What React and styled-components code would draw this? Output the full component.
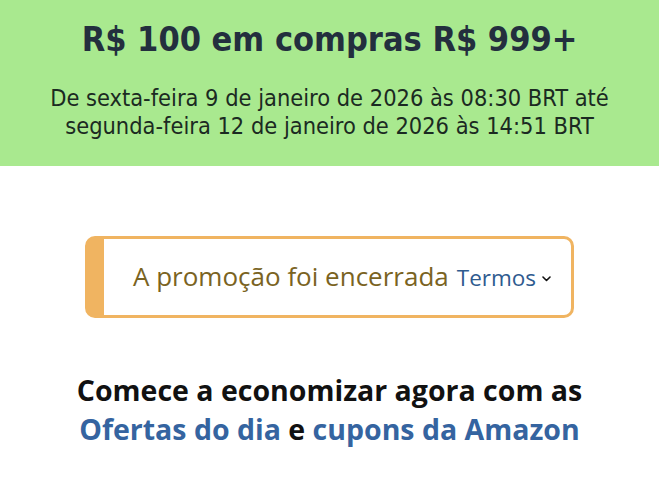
import React from "react";
import styled, { createGlobalStyle } from "styled-components";

const Global = createGlobalStyle`
  html, body { margin: 0; padding: 0; background: #fff; }
  body { font-family: "Open Sans", "Noto Sans", sans-serif; }
`;

const Page = styled.div`
  width: 659px;
  height: 500px;
  overflow: hidden;
  display: flex;
  flex-direction: column;
`;

const Banner = styled.header`
  background: #a9e98f;
  height: 166px;
  box-sizing: border-box;
  padding-top: 14px;
  display: flex;
  flex-direction: column;
  align-items: center;
  color: #1f2b38;
  text-align: center;
`;

const Title = styled.h1`
  margin: 0;
  font-family: "Liberation Sans Narrow", "DejaVu Sans Condensed", sans-serif;
  font-weight: 700;
  font-size: 34px;
  line-height: 50px;
  color: #232f3e;
`;

const Dates = styled.p`
  margin: 20px 0 0;
  font-family: "Liberation Sans Narrow", "DejaVu Sans Condensed", sans-serif;
  font-size: 23.4px;
  line-height: 28px;
  color: #1b2a22;
`;

const Body = styled.main`
  display: flex;
  flex-direction: column;
  align-items: center;
  padding-top: 70px;
`;

const Alert = styled.div`
  width: 489px;
  height: 82px;
  box-sizing: border-box;
  border: 3px solid #f0b461;
  border-left-width: 19px;
  border-radius: 10px;
  display: flex;
  align-items: baseline;
  padding: 21px 0 0 29px;
  background: #fff;
`;

const Message = styled.span`
  font-size: 26px;
  line-height: 32px;
  color: #7a6322;
  white-space: nowrap;
`;

const Terms = styled.button`
  margin-left: 8px;
  border: 0;
  background: none;
  padding: 0;
  display: inline-flex;
  align-items: baseline;
  gap: 6px;
  font-family: "Open Sans", "Noto Sans", sans-serif;
  font-size: 22.5px;
  color: #2f5b8f;
  cursor: pointer;
`;

const Chevron = styled.svg`
  align-self: center;
  margin-top: 2px;
`;

const Promo = styled.p`
  margin: 53px 0 0;
  font-family: "Open Sans", "Noto Sans", sans-serif;
  font-weight: 700;
  font-size: 28.5px;
  line-height: 39px;
  text-align: center;
  color: #111;
`;

const Link = styled.a`
  color: #3564a0;
  text-decoration: none;
`;

export default function App() {
  return (
    <Page>
      <Global />
      <Banner>
        <Title>R$ 100 em compras R$ 999+</Title>
        <Dates>
          De sexta-feira 9 de janeiro de 2026 às 08:30 BRT até
          <br />
          segunda-feira 12 de janeiro de 2026 às 14:51 BRT
        </Dates>
      </Banner>
      <Body>
        <Alert>
          <Message>A promoção foi encerrada</Message>
          <Terms>
            Termos
            <Chevron width="9" height="6" viewBox="0 0 9 6" fill="none">
              <path d="M1 1l3.5 3.5L8 1" stroke="#111" strokeWidth="1.6" strokeLinecap="round" strokeLinejoin="round" />
            </Chevron>
          </Terms>
        </Alert>
        <Promo>
          Comece a economizar agora com as
          <br />
          <Link href="#">Ofertas do dia</Link> e <Link href="#">cupons da Amazon</Link>
        </Promo>
      </Body>
    </Page>
  );
}
